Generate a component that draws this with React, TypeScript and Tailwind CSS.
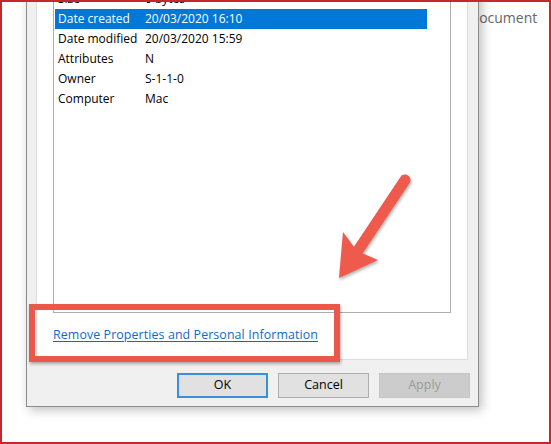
const rows = [
  { label: 'Size', value: '0 bytes' },
  { label: 'Date created', value: '20/03/2020 16:10', selected: true },
  { label: 'Date modified', value: '20/03/2020 15:59' },
  { label: 'Attributes', value: 'N' },
  { label: 'Owner', value: 'S-1-1-0' },
  { label: 'Computer', value: 'Mac' },
]

const DialogButton = ({ label, variant }: { label: string; variant: 'default' | 'normal' | 'disabled' }) => {
  const styles = {
    default: 'bg-[#e1e1e1] border-2 border-[#3b8edb] text-black',
    normal: 'bg-[#e1e1e1] border border-[#adadad] text-black',
    disabled: 'bg-[#cccccc] border border-[#c4c4c4] text-[#9a9a9a]',
  }[variant]
  return <div className={`w-[91px] h-[25px] flex items-center justify-center text-[12.5px] ${styles}`}>{label}</div>
}

export default function App() {
  return (
    <div className="relative w-[551px] h-[444px] overflow-hidden bg-white font-['Open_Sans',sans-serif]">
      {/* background window */}
      <div className="absolute left-[469px] top-[7px] text-[14px] text-[#666]">Document</div>

      {/* properties dialog */}
      <div className="absolute left-[26px] top-[-30px] w-[453px] h-[437px] flex flex-col bg-[#f0f0f0] border border-[#8c8c8c] shadow-[3px_3px_10px_rgba(0,0,0,0.25)] pt-[9px] pb-[8px]">
        <div className="flex-1 mx-[9px] mr-[10px] bg-white border border-[#dcdcdc] flex flex-col pt-[5px] px-[16px]">
          <div className="h-[327px] border border-[#adadad] bg-white pt-[2px] pl-[1px]">
            {rows.map((r) => (
              <div
                key={r.label}
                className={`w-[372px] h-5 flex items-center text-[12px] ${r.selected ? 'bg-[#0078d7] text-white' : 'text-black'}`}
              >
                <span className="w-[90px] pl-[3px] whitespace-nowrap">{r.label}</span>
                <span className="whitespace-nowrap">{r.value}</span>
              </div>
            ))}
          </div>
          <div className="mt-[14px] text-[12.4px] tracking-[0.1px] text-[#1467c8] underline underline-offset-2 leading-4 whitespace-nowrap">
            Remove Properties and Personal Information
          </div>
        </div>
        <div className="mt-[13px] flex justify-end gap-[10px] pr-[8px]">
          <DialogButton label="OK" variant="default" />
          <DialogButton label="Cancel" variant="normal" />
          <DialogButton label="Apply" variant="disabled" />
        </div>
      </div>

      {/* callout box */}
      <div className="absolute left-[29px] top-[304px] w-[311px] h-[58px] border-[6px] border-[#e9584a] shadow-[1px_2px_3px_rgba(0,0,0,0.3)]" />

      {/* callout arrow */}
      <svg className="absolute left-0 top-0" width="551" height="444" viewBox="0 0 551 444">
        <g style={{ filter: 'drop-shadow(1px 2px 1.5px rgba(0,0,0,0.3))' }}>
          <line x1="405" y1="180" x2="359" y2="249" stroke="#ee5a4b" strokeWidth="11" strokeLinecap="round" />
          <polygon points="339,278 343,232 357,251 378,260" fill="#ee5a4b" />
        </g>
      </svg>

      {/* screenshot frame */}
      <div className="absolute inset-0 border-2 border-[#c4282c] pointer-events-none" />
    </div>
  )
}
